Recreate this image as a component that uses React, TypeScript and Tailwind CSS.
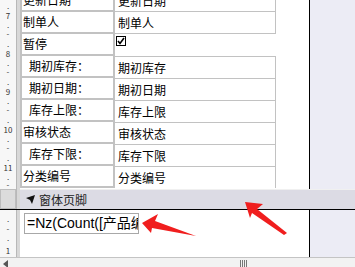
const rows = [
  { label: '更新日期', value: '更新日期', indent: false },
  { label: '制单人', value: '制单人', indent: false },
  { label: '暂停', value: null, indent: false },
  { label: '期初库存：', value: '期初库存', indent: true },
  { label: '期初日期：', value: '期初日期', indent: true },
  { label: '库存上限：', value: '库存上限', indent: true },
  { label: '审核状态', value: '审核状态', indent: false },
  { label: '库存下限：', value: '库存下限', indent: true },
  { label: '分类编号', value: '分类编号', indent: false },
];

// ruler marks, centre offset in px
const detailMarks = [
  { y: 5, t: '.' }, { y: 15, t: '7' }, { y: 24, t: '.' }, { y: 33, t: '-' }, { y: 43, t: '.' },
  { y: 53, t: '8' }, { y: 62, t: '.' }, { y: 71, t: '-' }, { y: 81, t: '.' },
  { y: 91, t: '9' }, { y: 100, t: '.' }, { y: 109, t: '-' }, { y: 119, t: '.' },
  { y: 129, t: '10' }, { y: 138, t: '.' }, { y: 147, t: '-' }, { y: 157, t: '.' },
  { y: 167, t: '11' }, { y: 176, t: '.' }, { y: 184, t: '-' },
];
const footerMarks = [
  { y: 8, t: '.' }, { y: 18, t: '-' }, { y: 27, t: '.' }, { y: 40, t: '1' },
];

function Ruler({ marks, h }: { marks: { y: number; t: string }[]; h: number }) {
  return (
    <div className="flex shrink-0" style={{ height: h }}>
      <div className="relative w-[16px] h-full bg-[#f7f7f7] overflow-hidden">
        {marks.map((m, i) => (
          <span
            key={i}
            className="absolute left-0 w-full text-center text-[8px] leading-[7px] h-[7px] text-[#333]"
            style={{ top: m.y - 3 }}
          >
            {m.t}
          </span>
        ))}
      </div>
      <div className="w-[4px] h-full bg-[#d8d8d8] border-l border-[#b8b8b8]" />
    </div>
  );
}

export default function App() {
  return (
    <div
      className="relative w-[355px] h-[267px] overflow-hidden bg-white flex flex-col"
      style={{ fontFamily: '"Noto Sans CJK SC", "Liberation Sans", sans-serif' }}
    >
      {/* detail */}
      <div className="flex h-[189px] shrink-0">
        <Ruler marks={detailMarks} h={189} />
        <div className="w-[290px] h-full bg-white border-r border-black overflow-hidden">
          <div className="-mt-[10px] flex flex-col">
            {rows.map((r, i) => (
              <div key={i} className="flex h-[22px]">
                <div
                  className={`w-[95px] h-full bg-white border-x-2 border-b-2 border-[#c2c2c2] flex items-center text-[12px] text-black ${r.indent ? 'pl-[7px]' : 'pl-[1px]'}`}
                >
                  {r.label}
                </div>
                {r.value === null ? (
                  <div className="w-[161px] h-full pl-[1px] pt-[2px]">
                    <div className="w-[10px] h-[10px] border border-black bg-white flex items-center justify-center">
                      <svg width="8" height="8" viewBox="0 0 8 8">
                        <path d="M1 4 L3 6.5 L7 1" stroke="black" strokeWidth="1.6" fill="none" />
                      </svg>
                    </div>
                  </div>
                ) : (
                  <div
                    className={`w-[161px] h-full border-r border-[#c2c2c2] flex items-center pl-[3px] text-[12px] text-black ${i < 2 ? 'border-b' : 'border-t'}`}
                  >
                    {r.value}
                  </div>
                )}
              </div>
            ))}
          </div>
        </div>
        <div className="flex-1 h-full bg-[#ececf5]" />
      </div>

      {/* footer header bar */}
      <div className="flex h-[21px] shrink-0 border-b border-black">
        <div className="w-[16px] h-full bg-[#dcdcdc] border border-[#bdbdbd]" />
        <div className="w-[4px] h-full bg-[#d8d8d8] border-l border-[#b8b8b8]" />
        <div className="flex-1 h-full bg-[#dcdbe4] border-t border-[#f0f0f0] flex items-center pl-[6px] gap-[3px]">
          <svg width="10" height="10" viewBox="0 0 10 10">
            <polygon points="0,3 9,0 6,9 4,5" fill="#111" />
          </svg>
          <span className="text-[12px] text-[#222]">窗体页脚</span>
        </div>
      </div>

      {/* footer section */}
      <div className="flex h-[47px] shrink-0">
        <Ruler marks={footerMarks} h={47} />
        <div className="w-[290px] h-full bg-white border-r border-black pt-[3px] pl-[4px]">
          <div
            className="w-[115px] h-[21px] border border-[#a8a8a8] overflow-hidden whitespace-nowrap flex items-center pl-[2px] text-[14px] text-black"
            style={{ fontFamily: '"Liberation Sans", "Noto Sans CJK SC", sans-serif' }}
          >
            =Nz(Count([产品编号]),0)
          </div>
        </div>
        <div className="flex-1 h-full bg-[#ececf5]" />
      </div>

      {/* scrollbar */}
      <div className="relative flex-1 bg-[#f2f2f2] border-t border-[#c4c4c4]">
        <svg className="absolute left-[3px] top-[2px]" width="6" height="8" viewBox="0 0 6 8">
          <polygon points="5,0 5,8 0,4" fill="#555" />
        </svg>
        <div className="absolute left-[240px] top-[2px] flex gap-[1px]">
          <div className="w-px h-[7px] bg-[#777]" />
          <div className="w-px h-[7px] bg-[#777]" />
          <div className="w-px h-[7px] bg-[#777]" />
          <div className="w-px h-[7px] bg-[#777]" />
        </div>
      </div>

      {/* red arrows */}
      <svg className="absolute left-0 top-0 pointer-events-none" width="355" height="267" viewBox="0 0 355 267">
        <polygon points="142,223 158,214 155,221 196,236 152,228 151,233" fill="#f01e1e" />
        <polygon points="245,202 263,204 257,209 287,233 284,235 252,213 250,218" fill="#f01e1e" />
      </svg>
    </div>
  );
}
